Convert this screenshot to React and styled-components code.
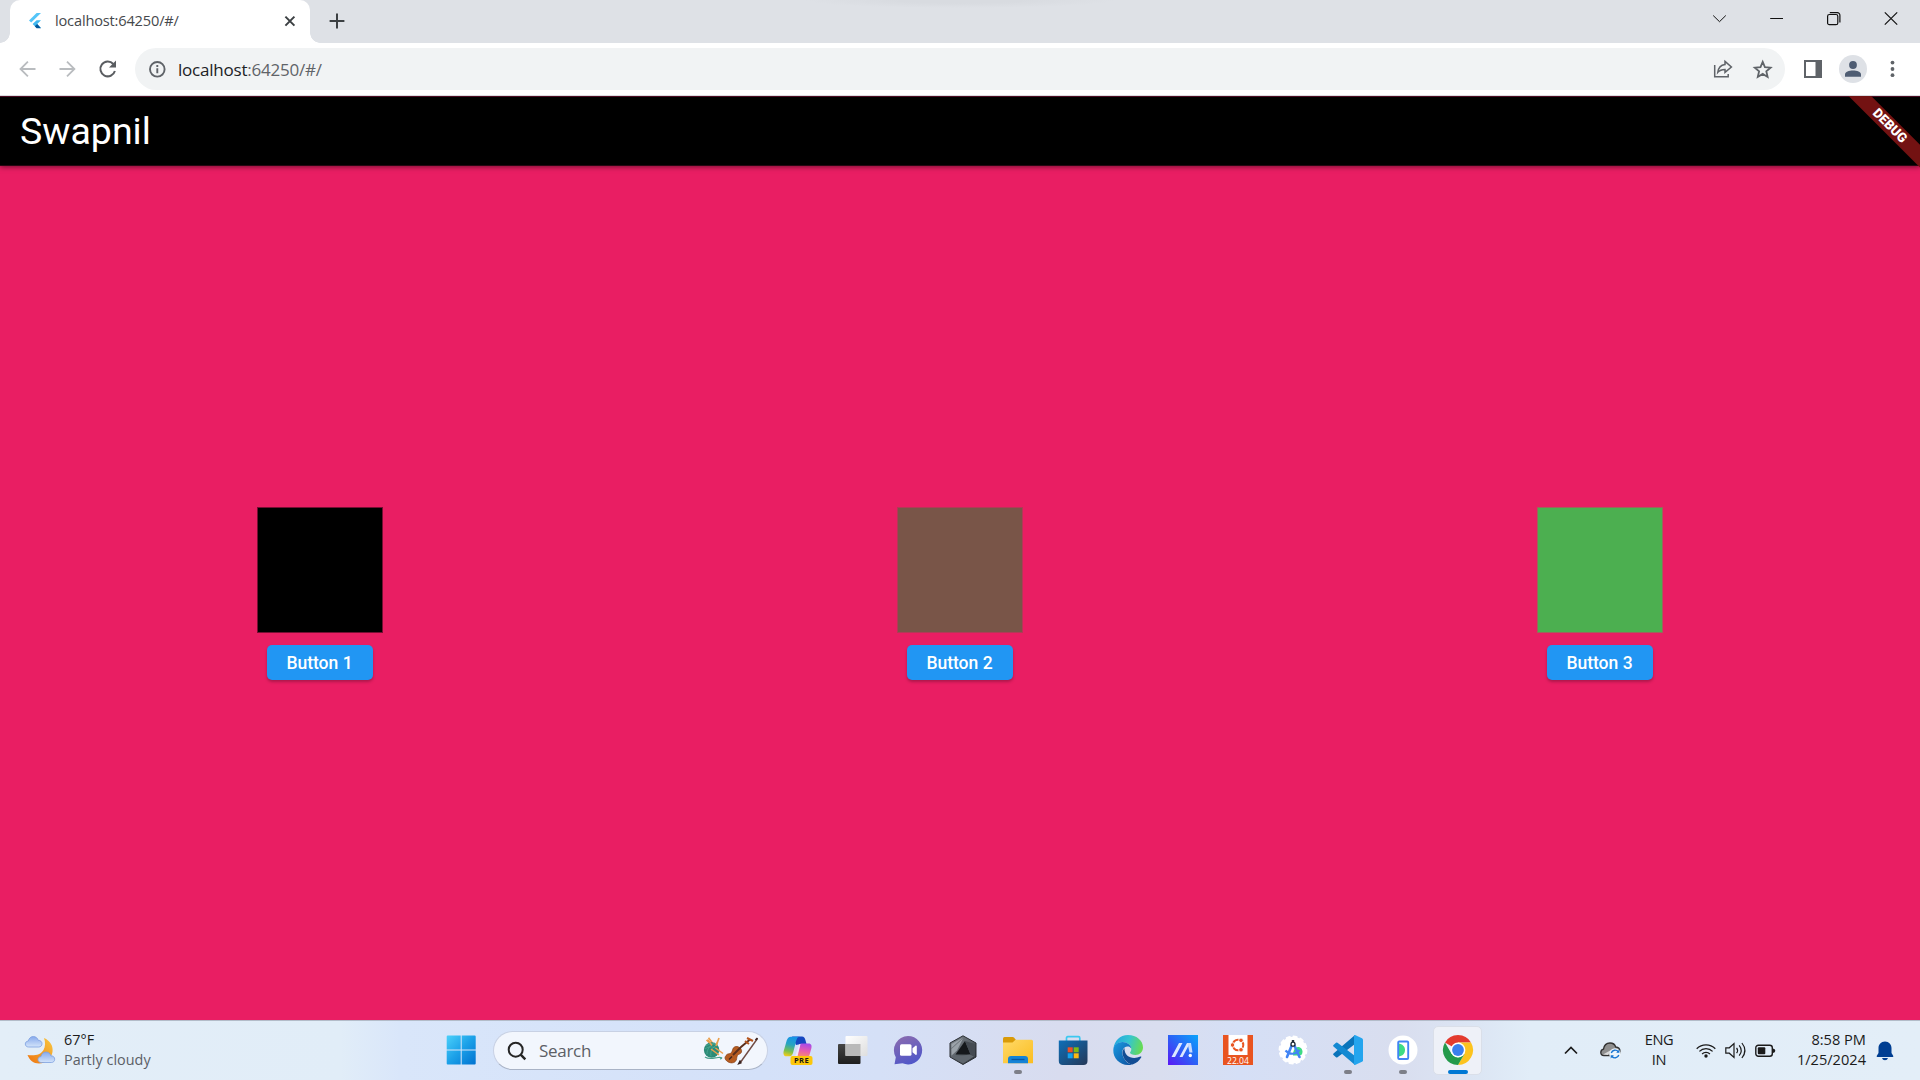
import React from "react";
import styled, { createGlobalStyle, css } from "styled-components";

const Global = createGlobalStyle`
  * { box-sizing: border-box; }
  html, body { margin: 0; padding: 0; }
  body { width: 1920px; height: 1080px; overflow: hidden; background: #e91e63; }
  svg { display: block; flex: none; overflow: visible; }
`;

const segoe = css`
  font-family: "Open Sans", "Noto Sans", sans-serif;
`;

const Screen = styled.div`
  display: flex;
  flex-direction: column;
  width: 1920px;
  height: 1080px;
  overflow: hidden;
  ${segoe}
`;

/* ---------- browser chrome ---------- */

const TabStrip = styled.div`
  display: flex;
  align-items: flex-end;
  height: 43px;
  padding-left: 10px;
  background: radial-gradient(ellipse 155px 8px at 960px 0, #d8dbe0 40%, transparent 100%) #dee1e6;
`;

const Tab = styled.div`
  position: relative;
  display: flex;
  align-items: center;
  width: 300px;
  height: 43px;
  padding: 0 14px 1px 19px;
  border-radius: 10px 10px 0 0;
  background: #fff;
  &::before,
  &::after {
    content: "";
    position: absolute;
    bottom: 0;
    width: 10px;
    height: 10px;
  }
  &::before {
    left: -10px;
    background: radial-gradient(circle at 0 0, transparent 9.5px, #fff 10px);
  }
  &::after {
    right: -10px;
    background: radial-gradient(circle at 100% 0, transparent 9.5px, #fff 10px);
  }
`;

const TabTitle = styled.span`
  flex: 1;
  margin-left: 13px;
  padding-bottom: 2px;
  font-size: 14.6px;
  letter-spacing: -0.17px;
  color: #45484c;
  white-space: nowrap;
`;

const NewTab = styled.div`
  display: flex;
  align-items: center;
  height: 43px;
  margin-left: 19px;
  padding-bottom: 1px;
`;

const WindowControls = styled.div`
  display: flex;
  align-items: center;
  gap: 43px;
  height: 38px;
  margin: 0 22px 5px auto;
`;

const Toolbar = styled.div`
  display: flex;
  align-items: center;
  height: 53px;
  padding: 0 14px 0 18px;
  background: #fff;
  border-bottom: 1px solid #dadce0;
`;

const NavButtons = styled.div`
  display: flex;
  align-items: center;
  gap: 20px;
  margin-right: 17px;
`;

const Omnibox = styled.div`
  display: flex;
  align-items: center;
  flex: 1;
  height: 42px;
  padding: 0 12px 0 13px;
  border-radius: 21px;
  background: #f1f3f4;
`;

const Url = styled.span`
  flex: 1;
  margin-left: 12px;
  font-size: 17px;
  letter-spacing: -0.22px;
  color: #5f6368;
  white-space: nowrap;
  b {
    font-weight: 400;
    color: #202124;
  }
`;

const OmniActions = styled.div`
  display: flex;
  gap: 20px;
`;

const ToolbarActions = styled.div`
  display: flex;
  align-items: center;
  margin-left: 19px;
`;

const Avatar = styled.div`
  display: flex;
  align-items: center;
  justify-content: center;
  width: 28px;
  height: 28px;
  margin: 0 13px 0 17px;
  border-radius: 50%;
  background: #dee1e6;
`;

/* ---------- Flutter page ---------- */

const Page = styled.main`
  position: relative;
  display: flex;
  flex-direction: column;
  flex: 1;
  overflow: hidden;
  background: #e91e63;
  font-family: Roboto, sans-serif;
`;

const AppBar = styled.header`
  display: flex;
  align-items: center;
  height: 70px;
  padding: 0 20px 1px;
  background: #000;
  border-top: 1px solid #4a0a20;
  border-bottom: 1px solid #2a0612;
  box-shadow: 0 1px 5px rgba(0, 0, 0, 0.5);
  color: #fff;
  font-size: 37.5px;
  letter-spacing: 0;
`;

const DebugRibbon = styled.div`
  position: absolute;
  top: 22px;
  left: 1830px;
  width: 120px;
  height: 15.5px;
  background: #731212;
  color: #fff;
  font-size: 13.2px;
  font-weight: 900;
  line-height: 15.5px;
  text-align: center;
  transform: rotate(45deg);
`;

const Columns = styled.section`
  display: grid;
  grid-template-columns: repeat(3, 1fr);
  flex: 1;
`;

const Column = styled.div`
  display: flex;
  flex-direction: column;
  align-items: center;
  justify-content: center;
  gap: 12px;
  padding-top: 1px;
`;

const Swatch = styled.div`
  width: 126px;
  height: 126px;
  border: 1px solid color-mix(in srgb, ${(p) => p.$color} 50%, #e91e63);
  background: ${(p) => p.$color};
`;

const FlutterButton = styled.button`
  width: 106px;
  height: 35px;
  padding: 0 1px 0 0;
  border: 0;
  border-radius: 5px;
  background: #2196f3;
  box-shadow: 0 2px 3px rgba(0, 0, 0, 0.25);
  color: #fff;
  font: 500 17.5px Roboto, sans-serif;
`;

/* ---------- taskbar ---------- */

const Taskbar = styled.footer`
  display: flex;
  align-items: center;
  height: 60px;
  border-top: 1px solid #b3bcc9;
  background: linear-gradient(
    90deg,
    #e3eef8 0,
    #e1edf8 340px,
    #d9e6fa 400px,
    #d4e1f9 760px,
    #d5e0f7 880px,
    #d8dcef 1060px,
    #d9deef 1160px,
    #d5dff6 1240px,
    #d9deef 1400px,
    #dce6f4 1480px,
    #e1edf8 1530px,
    #e3eef8 1920px
  );
`;

const Weather = styled.div`
  display: flex;
  align-items: center;
  gap: 9px;
  width: 433px;
  padding: 0 0 2px 25px;
  color: #1b1b1b;
  font-size: 14.4px;
  line-height: 20px;
  letter-spacing: 0.03px;
`;

const Muted = styled.div`
  color: #5b6067;
`;

const Slot = styled.div`
  display: flex;
  position: relative;
  align-items: center;
  justify-content: center;
  width: 55px;
  height: 59px;
  padding-bottom: 1px;
`;

const ActiveTile = styled.div`
  display: flex;
  align-items: center;
  justify-content: center;
  width: 49px;
  height: 49px;
  border: 1px solid #dadfe9;
  border-radius: 5px;
  background: #eef1f8;
`;

const Indicator = styled.i`
  position: absolute;
  bottom: 6px;
  width: ${(p) => (p.$active ? 20 : 8)}px;
  height: 4px;
  border-radius: 2px;
  background: ${(p) => (p.$active ? "#0078d4" : "#7d7f88")};
`;

const SearchBox = styled.div`
  display: flex;
  align-items: center;
  width: 275px;
  height: 39px;
  margin: 0 2px 0 5px;
  padding: 0 8px 0 13px;
  border: 1px solid #c8d1e4;
  border-bottom-color: #a9b3c6;
  border-radius: 20px;
  background: #f2f6fd;
`;

const SearchText = styled.span`
  flex: 1;
  margin-left: 12px;
  color: #5c5f66;
  font-size: 17px;
  letter-spacing: -0.3px;
`;

const Tray = styled.div`
  display: flex;
  align-items: center;
  margin-left: auto;
  padding-right: 26px;
  color: #1b1b1b;
`;

const TrayText = styled.div`
  width: ${(p) => p.$w}px;
  margin-left: ${(p) => p.$ml}px;
  padding-bottom: 3px;
  text-align: ${(p) => p.$align};
  font-size: 14.6px;
  line-height: 20px;
  letter-spacing: ${(p) => p.$ls}px;
  white-space: nowrap;
`;

const TrayIcon = styled.div`
  margin-left: ${(p) => p.$ml}px;
`;

/* ---------- icons ---------- */

const FlutterLogo = () => (
  <svg width="13" height="16" viewBox="0 0 13 16">
    <path d="M7.6 0H12L2.2 9.6 0 7.5z" fill="#54c5f8" />
    <path d="M7.6 7.2H12L8.2 11l3.8 4H7.6L3.6 11z" fill="#40b8f0" />
    <path d="M5.8 13.2 8.2 11l3.8 4.2H7.6z" fill="#01579b" />
  </svg>
);

const TabClose = () => (
  <svg width="12" height="12" viewBox="0 0 12 12" stroke="#3c4043" strokeWidth="2">
    <path d="M1.4 1.6l9 9M10.4 1.6l-9 9" />
  </svg>
);

const Plus = () => (
  <svg width="16" height="16" viewBox="0 0 16 16" stroke="#3c4043" strokeWidth="2">
    <path d="M8 .6v14.8M.6 8h14.8" />
  </svg>
);

const Arrow = ({ flip }) => (
  <svg width="20" height="20" viewBox="0 0 20 20" fill="none" stroke="#b9bcbf" strokeWidth="1.8">
    {flip ? <path d="M1.500 10h15M9 2.600 16.400 10 9 17.400" /> : <path d="M17.500 10H2.500M9.900 2.600 2.500 10l7.400 7.400" />}
  </svg>
);

const Reload = () => (
  <svg width="20" height="20" viewBox="0 0 20 20">
    <path d="M15.300 5A7.400 7.400 0 1 0 16.900 12" fill="none" stroke="#5a5d61" strokeWidth="2" />
    <path d="M18 1.400V8.400H11z" fill="#5a5d61" />
  </svg>
);

const Info = () => (
  <svg width="18" height="18" viewBox="0 0 18 18" fill="none" stroke="#5f6368">
    <circle cx="9.300" cy="9.300" r="7.300" strokeWidth="1.900" />
    <path d="M9.300 8.300v5M9.300 5.100v1.800" strokeWidth="1.900" />
  </svg>
);

const Share = () => (
  <svg width="20" height="20" viewBox="0 0 20 20" fill="none" stroke="#5f6368" strokeWidth="1.5">
    <path d="M1.7 6v11.8h13.5V15" />
    <path d="M12 2.4 18.4 8 12 13.4v-3c-3.2 0-5.4.8-7.2 3C5.3 9.2 7.6 6 12 5.5z" />
  </svg>
);

const Star = () => (
  <svg width="20" height="20" viewBox="0 0 20 20" fill="none" stroke="#5f6368" strokeWidth="1.8">
    <path d="M9.700 2.900l2.200 5.200 5.700.5-4.300 3.700 1.300 5.600L9.700 14.900l-4.900 3 1.300-5.600L1.800 8.600l5.700-.5z" />
  </svg>
);

const SidePanel = () => (
  <svg width="18" height="18" viewBox="0 0 18 18">
    <path d="M0 0h18v18H0zM2 2v14h9.500V2z" fill="#5f6368" fillRule="evenodd" />
  </svg>
);

const Person = () => (
  <svg width="16" height="16" viewBox="0 0 16 16" fill="#4f5d73">
    <circle cx="8" cy="4" r="3.900" />
    <path d="M0 15.700v-2.200c0-2.600 4-4 8-4s8 1.400 8 4v2.200z" />
  </svg>
);

const Dots = () => (
  <svg width="26" height="18" viewBox="0 0 26 18" fill="#5f6368">
    <circle cx="12.500" cy="2.600" r="1.900" />
    <circle cx="12.500" cy="9" r="1.900" />
    <circle cx="12.500" cy="15.200" r="1.900" />
  </svg>
);

const WinIcon = ({ kind }) => (
  <svg width="14" height="14" viewBox="0 0 14 14" fill="none" stroke="#111" strokeWidth="1.200">
    {kind === "down" && <path d="M.2 3.500 6.500 9.700 12.800 3.500" strokeWidth="1" />}
    {kind === "min" && <path d="M.2 6.500h12.800" strokeWidth="1" />}
    {kind === "max" && (
      <>
        <rect x=".6" y="2.500" width="10.200" height="10.200" rx="1.800" />
        <path d="M2.800.6H10.100A2.600 2.600 0 0 1 12.900 3.400V10.600" />
      </>
    )}
    {kind === "close" && <path d="M.8.300l12.400 12.400M13.200.300.8 12.700" />}
  </svg>
);

const CloudShape = ({ t }) => (
  <path
    transform={t}
    d="M3.500 11C1.500 11 .3 9.600.3 8c0-1.700 1.200-2.900 3-3C3.900 2.300 5.800.5 8.300.5c2.400 0 4.300 1.500 4.900 3.800 2.300-.1 3.800 1.500 3.800 3.400S15.700 11 13.700 11z"
    fill="url(#cloud)"
    stroke="#7c9fdf"
    strokeWidth=".8"
  />
);

const WeatherIcon = () => (
  <svg width="30" height="30" viewBox="0 0 30 30">
    <defs>
      <linearGradient id="cloud" x1="0" y1="0" x2="0" y2="1">
        <stop offset="0" stopColor="#86a9ec" />
        <stop offset="1" stopColor="#d3e4fa" />
      </linearGradient>
      <linearGradient id="moon" x1="1" y1="0" x2="0" y2="1">
        <stop offset="0" stopColor="#f8c840" />
        <stop offset="1" stopColor="#ee7410" />
      </linearGradient>
    </defs>
    <path d="M19 3c6 2.500 9.500 8 8.500 14S21 28.500 14 28.500C8.500 28.500 4.500 25 2.500 20c7 1 13 0 16-5 2-3.500 2-8 .5-12z" fill="url(#moon)" />
    <CloudShape t="translate(0 1)" />
    <CloudShape t="translate(12.700 16.500)" />
  </svg>
);

const Windows = () => (
  <svg width="30" height="30" viewBox="0 0 30 30">
    <defs>
      <linearGradient id="win" x1="0" y1="0" x2="1" y2="1">
        <stop offset="0" stopColor="#4bd0fa" />
        <stop offset=".5" stopColor="#1ba0e8" />
        <stop offset="1" stopColor="#0072d0" />
      </linearGradient>
    </defs>
    <path d="M1.700.5H14.700V14.500H.7V1.500q0-1 1-1zM15.700.5H28.700q1 0 1 1V14.500H15.700zM.7 15.500H14.700V29.500H1.700q-1 0-1-1zM15.700 15.500H29.700V28.500q0 1-1 1H15.700z" fill="url(#win)" />
  </svg>
);

const Magnifier = () => (
  <svg width="20" height="20" viewBox="0 0 20 20" fill="none" stroke="#262626" strokeWidth="2">
    <circle cx="8.700" cy="8.700" r="7" />
    <path d="M13.700 13.700l4.600 4.600" strokeWidth="2.400" />
  </svg>
);

const YarnAndViolin = () => (
  <svg width="56" height="28" viewBox="0 0 56 28" fill="none">
    <path d="M12 11 3.500 3M12 9.500 5.500 .8M13 9 16 1" stroke="#eba04c" strokeWidth="1.700" />
    <circle cx="8.600" cy="13" r="7.700" fill="#2c8b77" />
    <path d="M3 9c4-3 8-3 12 0M2 12c4-3 9-3 13 1M4 17c0-5 3-9 8-11M8 19c-1-4 1-9 6-11" stroke="#56b39c" strokeWidth=".6" />
    <path d="M4.500 2.500l4.500 6M12.500 11l7.500 5.500M8 12l8 6M13 9l1.500-4" stroke="#eba04c" strokeWidth="1.500" />
    <path d="M2 20c4 3 9 1 13 .5s5 .5 2 1.500" stroke="#49a08c" strokeWidth="1.200" />
    <path d="M23 18.500c1.500-2.500 4-1 5.500-3s.5-4 3-5.500c3-1.800 8 1.500 7 5-.8 2.500-3.200 1.800-4.200 3.700s0 3.800-2 5.800c-2.500 2.300-6.300 1.500-8.600-.6s-2-3.700-.7-5.400z" fill="#b65c20" stroke="#853d14" strokeWidth=".7" />
    <path d="M30 18 38 10l9-7.500" stroke="#5b2f1c" strokeWidth="1.900" />
    <path d="M26 22.500l3-3" stroke="#41241a" strokeWidth="1.500" />
    <path d="M44 1l6 3M42 4l4 3" stroke="#b5541d" strokeWidth="2" />
    <path d="M54.500 1.500 37 26" stroke="#6f4a43" strokeWidth="1.400" />
    <path d="M37.500 23.500l-1.500 3 2.500-1M54.500 1l-2 2" stroke="#3a2320" strokeWidth="1.700" />
  </svg>
);

const Copilot = () => (
  <svg width="30" height="30" viewBox="0 0 30 30">
    <defs>
      <linearGradient id="cpA" x1=".5" y1="0" x2=".3" y2="1">
        <stop offset="0" stopColor="#1593e8" />
        <stop offset=".4" stopColor="#27a4c0" />
        <stop offset=".75" stopColor="#7cc04b" />
        <stop offset="1" stopColor="#f0cb1c" />
      </linearGradient>
      <linearGradient id="cpB" x1=".6" y1="0" x2=".4" y2="1">
        <stop offset="0" stopColor="#a64be8" />
        <stop offset=".5" stopColor="#e75bb0" />
        <stop offset="1" stopColor="#fb9462" />
      </linearGradient>
    </defs>
    <path d="M9 1.500h10c2 0 2.800 1.500 3.400 3.500L23.500 9H18l-5 1z" fill="#1546c0" />
    <path d="M8 1.700h9C14 1.700 13.500 4.500 12.500 8.500l-2.500 9.500c-.8 2.500-1.600 3.300-4 3.300H3.500C.8 21.300 0 19 .7 16L3.700 5.500C4.500 3 5.700 1.700 8 1.700z" fill="url(#cpA)" />
    <path d="M18 8.500h7.500c3 0 3.500 2.500 2.800 5L26.500 20c-.6 2.300-1.600 2.600-4 2.600H11c2.500 0 3-1.500 4-5l1.500-6C17 9.500 17 8.500 18 8.500z" fill="url(#cpB)" />
    <path d="M17.500 9h-1L12 21.500h2.500z" fill="#f5e6fa" />
    <rect x="7.500" y="21" width="22" height="9" rx="2" fill="#fcc70a" />
    <text x="18.500" y="28.300" textAnchor="middle" fontFamily="Open Sans, sans-serif" fontWeight="700" fontSize="7.600" letterSpacing=".3" fill="#1c1a10">PRE</text>
  </svg>
);

const TaskView = () => (
  <svg width="30" height="30" viewBox="0 0 30 30">
    <defs>
      <linearGradient id="tvA" x1="0" y1="0" x2="0" y2="1">
        <stop offset="0" stopColor="#454545" />
        <stop offset="1" stopColor="#1e1e1e" />
      </linearGradient>
      <linearGradient id="tvB" x1="0" y1="0" x2="1" y2="1">
        <stop offset="0" stopColor="#fff" />
        <stop offset="1" stopColor="#dedede" />
      </linearGradient>
    </defs>
    <rect x="0" y="9" width="22.500" height="20" rx="1" fill="url(#tvA)" />
    <rect x="7.500" y="1" width="22" height="20" rx="1" fill="url(#tvB)" />
    <path d="M7.500 9h15v12h-15z" fill="#b9b9b9" />
  </svg>
);

const Chat = () => (
  <svg width="30" height="30" viewBox="0 0 30 30">
    <defs>
      <linearGradient id="chat" x1=".1" y1="0" x2=".5" y2="1">
        <stop offset="0" stopColor="#8c6cae" />
        <stop offset="1" stopColor="#5157c8" />
      </linearGradient>
    </defs>
    <path d="M15 1a14.200 14.200 0 1 1-5.500 27.300L1.500 29.300l1.300-7A14.200 14.200 0 0 1 15 1z" fill="url(#chat)" />
    <rect x="7" y="9.300" width="11.500" height="11.500" rx="1.500" fill="#fff" />
    <path d="M19.500 13.300 22.800 10.500q1 0 1 1v7.500q0 1-1 1L19.500 17.200z" fill="#fff" />
  </svg>
);

const Armoury = () => (
  <svg width="30" height="30" viewBox="0 0 30 30">
    <defs>
      <linearGradient id="arm" x1="0" y1="0" x2="1" y2="1">
        <stop offset="0" stopColor="#7f858c" />
        <stop offset=".5" stopColor="#5a6168" />
        <stop offset="1" stopColor="#22262a" />
      </linearGradient>
    </defs>
    <path d="M15 .8 28 8v14l-13 7.500L2 22V8z" fill="url(#arm)" stroke="#2b2f34" strokeWidth="1" />
    <path d="M15 2.500 3.500 13V9zM3.500 14 15 3.500 9 15.500l-5.500 5z" fill="#abb3ba" opacity=".75" />
    <path d="M17 6 7.500 19.500h15z" fill="#15181b" />
    <path d="M17 6l5.500 13.500L27 22V9z" fill="#454b52" />
    <path d="M4 22l18-2.500 4 2-11 7z" fill="#5f666d" />
  </svg>
);

const Explorer = () => (
  <svg width="30" height="30" viewBox="0 0 30 30">
    <defs>
      <linearGradient id="fold" x1="0" y1="0" x2="1" y2="1">
        <stop offset="0" stopColor="#ffd968" />
        <stop offset="1" stopColor="#fbbd20" />
      </linearGradient>
    </defs>
    <path d="M0 3.500q0-1.500 1.500-1.500h8q1 0 1.700.8L13 5 10 8.500H0z" fill="#d99a08" />
    <path d="M0 7.500h9.500l3-2.700H28.500q1.500 0 1.500 1.500V28.300H0z" fill="url(#fold)" />
    <path d="M5 28.300V24q0-3 3-3H22q3 0 3 3V28.300z" fill="#1583d6" />
    <path d="M8.500 24.500H21.500" stroke="#0c56a0" strokeWidth="1.300" />
  </svg>
);

const Store = () => (
  <svg width="30" height="30" viewBox="0 0 30 30">
    <defs>
      <linearGradient id="store" x1="0" y1="0" x2="1" y2="1">
        <stop offset="0" stopColor="#0e6fb8" />
        <stop offset="1" stopColor="#253858" />
      </linearGradient>
    </defs>
    <path d="M8.500 6.500V3q0-1.300 1.300-1.300H20.500q1.300 0 1.300 1.300V6.500" fill="none" stroke="#3cc8f0" strokeWidth="1.700" />
    <path d="M.8 5.500H29.500V26q0 4-4 4H4.800q-4 0-4-4z" fill="url(#store)" />
    <path d="M9.700 12.300h5v5h-5z" fill="#f05024" />
    <path d="M15.700 12.300h5v5h-5z" fill="#7fba14" />
    <path d="M9.700 18.300h5v5h-5z" fill="#14a2ee" />
    <path d="M15.700 18.300h5v5h-5z" fill="#fcb813" />
  </svg>
);

const Edge = () => (
  <svg width="30" height="30" viewBox="0 0 30 30">
    <defs>
      <linearGradient id="edA" x1="0" y1=".3" x2="1" y2=".5">
        <stop offset="0" stopColor="#23a6e0" />
        <stop offset=".5" stopColor="#35c5d0" />
        <stop offset="1" stopColor="#68dc50" />
      </linearGradient>
      <linearGradient id="edB" x1="0" y1="0" x2="1" y2="1">
        <stop offset="0" stopColor="#1a9be2" />
        <stop offset="1" stopColor="#0d4f9e" />
      </linearGradient>
    </defs>
    <path d="M.5 14C1 6 7 0 15 0c8.500 0 15 5.500 15 12.500 0 4.500-3.500 7.500-7.500 7.500-3 0-5.500-1-5.500-2.200 0-.8 1.300-1.500 1.300-3.800C18.300 10 14 7 9.500 7 5 7 1.500 10 .5 14z" fill="url(#edA)" />
    <path d="M.3 15C.5 10 4.500 7 9.500 7c4.700 0 8.500 3 8.800 6.500-1-1.700-2.700-2.300-4.300-2C9 12.500 8 18 11 23.500c2 3.500 4.500 5.500 8 6-1.300.4-2.600.5-4 .5C6.500 30 0 23 .3 15z" fill="url(#edB)" />
    <path d="M11.500 13C8 16.500 9.500 22 13 26c2 2.200 4.200 3.400 6.500 3.500 3.800-1.300 7-4 8.800-7.300.3-.6-.3-1-.9-.7C20 25 11 22 11.500 13z" fill="#124d94" />
  </svg>
);

const MyAsus = () => (
  <svg width="30" height="30" viewBox="0 0 30 30">
    <defs>
      <linearGradient id="asus" x1="1" y1="0" x2="0" y2="1">
        <stop offset="0" stopColor="#0aa4fb" />
        <stop offset=".5" stopColor="#2b62f6" />
        <stop offset="1" stopColor="#5a17f5" />
      </linearGradient>
    </defs>
    <path d="M0 0h30v30H0z" fill="url(#asus)" />
    <path d="M3.500 22 11 8h3.500L7 22zM11.500 22 19 8h3L14.500 22z" fill="#dce8ff" />
    <path d="M19.500 8h3.500l1.500 9.500h-3z" fill="#c9dbff" />
    <circle cx="22.300" cy="20.500" r="1.700" fill="#fff" />
  </svg>
);

const Ubuntu = () => (
  <svg width="30" height="30" viewBox="0 0 30 30">
    <path d="M0 0h30v30H0z" fill="#e95420" />
    <path d="M5.500 0H24.500V20H5.500z" fill="#fff" />
    <circle cx="15" cy="10" r="5.300" fill="none" stroke="#e95420" strokeWidth="2" />
    <g fill="#e95420" stroke="#fff" strokeWidth="1">
      <circle cx="9.500" cy="10" r="2.300" />
      <circle cx="18" cy="5.300" r="2.300" />
      <circle cx="18" cy="14.800" r="2.300" />
    </g>
    <text x="15" y="28.900" textAnchor="middle" fontFamily="Open Sans, sans-serif" fontSize="8.600" fill="#fff">22.04</text>
  </svg>
);

const AndroidStudio = () => (
  <svg width="30" height="30" viewBox="0 0 30 30" fill="none">
    <circle cx="15" cy="15" r="13.200" fill="#fff" />
    <circle cx="15" cy="15" r="13.500" stroke="#fff" strokeWidth="1.800" strokeLinecap="round" strokeDasharray="3.500 3.570" />
    <path d="M15 20.500c0-5 2-8.500 5-8.500s4.500 2.500 4.500 5-1.500 3.500-3.500 3.500z" fill="#3ddc84" />
    <path d="M14.300 9 9 22M15.700 9 21.500 22" stroke="#4285f4" strokeWidth="2.600" strokeLinecap="round" />
    <path d="M7.500 15.500c4 4.500 10 4.300 14-.5" stroke="#4285f4" strokeWidth="2.200" />
    <circle cx="15" cy="9.200" r="2" fill="#fff" stroke="#202b38" strokeWidth="1.300" />
    <path d="M15 5v2.300" stroke="#202b38" strokeWidth="2.400" />
  </svg>
);

const VsCode = () => (
  <svg width="30" height="30" viewBox="0 0 30 30">
    <path d="M22 0v9L4.500 22.300q-.8.600-1.500 0L.5 20q-.9-.8 0-1.600z" fill="#0a74ba" />
    <path d="M22 30v-9L4.500 7.700q-.8-.6-1.500 0L.5 10q-.9.800 0 1.600z" fill="#1389d2" />
    <path d="M22 0l7 3.200q1 .5 1 1.600V25.200q0 1.100-1 1.600L22 30q-1 0-1-1V1q0-1 1-1z" fill="#24a5ee" />
  </svg>
);

const Emulator = () => (
  <svg width="30" height="30" viewBox="0 0 30 30">
    <circle cx="15" cy="15" r="14.500" fill="#fff" />
    <path d="M10.500 8.500c4 .5 6.500 3 6.500 6.500s-2.500 6-6.500 6.500z" fill="#3ddc84" />
    <rect x="10.200" y="6.500" width="10" height="17.500" rx="1" fill="none" stroke="#4285f4" strokeWidth="1.900" />
  </svg>
);

const Chrome = () => (
  <svg width="30" height="30" viewBox="0 0 30 30">
    <path d="M15 15 2 7.500A15 15 0 0 1 28 7.500H15z" fill="#e33b2e" />
    <path d="M15 7.500H28A15 15 0 0 1 15 30L21.500 18.700z" fill="#fcc31e" />
    <path d="M2 7.500 8.500 18.700 15 22.500 21.500 18.700 15 30A15 15 0 0 1 2 7.500z" fill="#239a4b" />
    <circle cx="15" cy="15" r="7.400" fill="#fff" />
    <circle cx="15" cy="15" r="5.900" fill="#3a7fee" />
  </svg>
);

const TrayChevron = () => (
  <svg width="14" height="14" viewBox="0 0 14 14" fill="none" stroke="#1b1b1b" strokeWidth="1.700">
    <path d="M1 9.500 7 3.500l6 6" />
  </svg>
);

const OneDrive = () => (
  <svg width="22" height="18" viewBox="0 0 22 18">
    <path d="M4 13.500C2 13.500.8 12.200.8 10.500S2 7.500 3.500 7.200C4 3.500 6.500 1 10 1c3 0 5 1.600 5.700 4 2.500.2 4.300 2 4.300 4.500 0 2.400-1.500 4-4 4z" fill="#8f8f8f" stroke="#303030" strokeWidth="1.300" />
    <path d="M3 12.500 12 7.500 8 13z" fill="#d9d9d9" />
    <circle cx="15" cy="12" r="5.800" fill="#eef5fb" />
    <path d="M11.300 11a4 4 0 0 1 7-1.300M18.800 13a4 4 0 0 1-7 1.300" fill="none" stroke="#1976d2" strokeWidth="1.400" />
    <path d="M19.400 7.500v3.200h-3.200zM10.700 16.500v-3.200h3.200z" fill="#1976d2" />
  </svg>
);

const Wifi = () => (
  <svg width="20" height="16" viewBox="0 0 20 16" fill="none" stroke="#1b1b1b" strokeWidth="1.300">
    <path d="M.7 5.700a13.200 13.200 0 0 1 18.600 0M3.400 8.400a9.300 9.300 0 0 1 13.200 0M6.100 11a5.500 5.500 0 0 1 7.800 0" />
    <circle cx="10" cy="13" r="1.700" fill="#1b1b1b" stroke="none" />
  </svg>
);

const Volume = () => (
  <svg width="21" height="18" viewBox="0 0 21 18" fill="none" stroke="#1b1b1b" strokeWidth="1.200">
    <path d="M.8 5.800H4.300L9 1.500v14L4.300 11.200H.8zM11.600 5.800q2 2.700 0 5.400M14.200 3.300q4 5.200 0 10.400M16.900 1q6 7.500 0 15" />
  </svg>
);

const Battery = () => (
  <svg width="21" height="14" viewBox="0 0 21 14">
    <rect x=".8" y="1.300" width="16.500" height="11" rx="2.500" fill="none" stroke="#1b1b1b" strokeWidth="1.400" />
    <rect x="2.800" y="3.300" width="7.500" height="7" rx="1" fill="#1b1b1b" />
    <path d="M18 4.500q2.300.6 2.300 2.300T18 9.100z" fill="#1b1b1b" />
  </svg>
);

const Bell = () => (
  <svg width="18" height="20" viewBox="0 0 18 20" fill="#003e92">
    <path d="M9 .5c4 0 6.500 3 6.500 6.500v5L17.300 15q.3 1-.7 1H1.400q-1 0-.7-1L2.500 12V7C2.500 3.500 5 .5 9 .5zM6 17h6q-.6 2.200-3 2.200T6 17z" />
  </svg>
);

const tiles = [
  { color: "#000", label: "Button 1" },
  { color: "#795548", label: "Button 2" },
  { color: "#4caf50", label: "Button 3" },
];

const apps = [
  { Icon: Copilot },
  { Icon: TaskView },
  { Icon: Chat },
  { Icon: Armoury },
  { Icon: Explorer, running: true },
  { Icon: Store },
  { Icon: Edge },
  { Icon: MyAsus },
  { Icon: Ubuntu },
  { Icon: AndroidStudio },
  { Icon: VsCode, running: true },
  { Icon: Emulator, running: true },
];

export default function App() {
  return (
    <Screen>
      <Global />
      <TabStrip>
        <Tab>
          <FlutterLogo />
          <TabTitle>localhost:64250/#/</TabTitle>
          <TabClose />
        </Tab>
        <NewTab>
          <Plus />
        </NewTab>
        <WindowControls>
          <WinIcon kind="down" />
          <WinIcon kind="min" />
          <WinIcon kind="max" />
          <WinIcon kind="close" />
        </WindowControls>
      </TabStrip>
      <Toolbar>
        <NavButtons>
          <Arrow />
          <Arrow flip />
          <Reload />
        </NavButtons>
        <Omnibox>
          <Info />
          <Url>
            <b>localhost</b>:64250/#/
          </Url>
          <OmniActions>
            <Share />
            <Star />
          </OmniActions>
        </Omnibox>
        <ToolbarActions>
          <SidePanel />
          <Avatar>
            <Person />
          </Avatar>
          <Dots />
        </ToolbarActions>
      </Toolbar>
      <Page>
        <AppBar>Swapnil</AppBar>
        <DebugRibbon>DEBUG</DebugRibbon>
        <Columns>
          {tiles.map((t) => (
            <Column key={t.label}>
              <Swatch $color={t.color} />
              <FlutterButton>{t.label}</FlutterButton>
            </Column>
          ))}
        </Columns>
      </Page>
      <Taskbar>
        <Weather>
          <WeatherIcon />
          <div>
            <div>67°F</div>
            <Muted>Partly cloudy</Muted>
          </div>
        </Weather>
        <Slot>
          <Windows />
        </Slot>
        <SearchBox>
          <Magnifier />
          <SearchText>Search</SearchText>
          <YarnAndViolin />
        </SearchBox>
        {apps.map(({ Icon, running }, i) => (
          <Slot key={i}>
            <Icon />
            {running && <Indicator />}
          </Slot>
        ))}
        <Slot>
          <ActiveTile>
            <Chrome />
          </ActiveTile>
          <Indicator $active />
        </Slot>
        <Tray>
          <TrayChevron />
          <TrayIcon $ml={22}>
            <OneDrive />
          </TrayIcon>
          <TrayText $w={40} $ml={17} $align="center" $ls={-0.4}>
            ENG
            <br />
            IN
          </TrayText>
          <TrayIcon $ml={17}>
            <Wifi />
          </TrayIcon>
          <TrayIcon $ml={9}>
            <Volume />
          </TrayIcon>
          <TrayIcon $ml={9}>
            <Battery />
          </TrayIcon>
          <TrayText $w={81} $ml={9} $align="right" $ls={0}>
            8:58 PM
            <br />
            1/25/2024
          </TrayText>
          <TrayIcon $ml={10}>
            <Bell />
          </TrayIcon>
        </Tray>
      </Taskbar>
    </Screen>
  );
}
